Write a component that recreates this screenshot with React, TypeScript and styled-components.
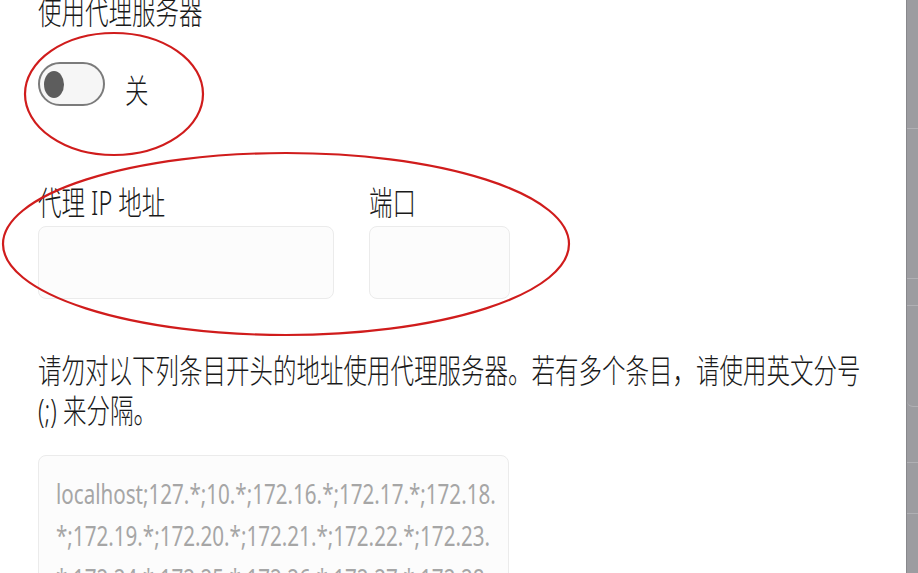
import React from 'react';
import styled, { createGlobalStyle } from 'styled-components';

const GlobalStyle = createGlobalStyle`
  html, body {
    margin: 0;
    padding: 0;
    background: #ffffff;
  }
  body {
    font-family: "Noto Sans", "Noto Sans CJK SC", sans-serif;
    color: #1a1a1a;
  }
`;

const Window = styled.div`
  position: relative;
  display: flex;
  width: 918px;
  height: 573px;
  overflow: hidden;
  background: #ffffff;
`;

const Content = styled.div`
  flex: 1;
  display: flex;
  flex-direction: column;
  padding-left: 38px;
`;

// the screenshot is stretched vertically, so text is stretched the same way
const Tall = styled.span<{ $origin?: string }>`
  display: block;
  transform: scaleY(1.38);
  transform-origin: ${p => p.$origin || 'left center'};
  white-space: nowrap;
`;

const Title = styled.div`
  font-family: "Noto Sans CJK SC", sans-serif;
  font-size: 23.5px;
  font-weight: 300;
  line-height: 20px;
  height: 20px;
`;

const ToggleRow = styled.div`
  display: flex;
  align-items: center;
  margin-top: 42px;
  height: 44px;
`;

const ToggleTrack = styled.div<{ $on?: boolean }>`
  box-sizing: border-box;
  width: 67px;
  height: 44px;
  border: 2px solid #7b7b7b;
  border-radius: 22px;
  background: ${p => (p.$on ? '#0067c0' : '#f6f6f6')};
  display: flex;
  align-items: center;
  justify-content: ${p => (p.$on ? 'flex-end' : 'flex-start')};
  padding: 0 4px;
`;

const ToggleKnob = styled.div<{ $on?: boolean }>`
  width: 20px;
  height: 27px;
  border-radius: 50%;
  background: ${p => (p.$on ? '#ffffff' : '#5d5d5d')};
`;

const ToggleText = styled.div`
  font-family: "Noto Sans CJK SC", sans-serif;
  font-size: 23.5px;
  font-weight: 300;
  line-height: 28px;
  margin-left: 20px;
  margin-top: 10px;
`;

const FieldRow = styled.div`
  display: flex;
  gap: 35px;
  margin-top: 83px;
`;

const Field = styled.div<{ $width: number }>`
  display: flex;
  flex-direction: column;
  width: ${p => p.$width}px;
`;

const FieldLabel = styled.div`
  font-family: "Noto Sans", "Noto Sans CJK SC", sans-serif;
  font-size: 23.5px;
  font-weight: 300;
  line-height: 28px;
  height: 28px;
  margin-bottom: 9px;
`;

const Input = styled.div`
  box-sizing: border-box;
  height: 73px;
  border: 1px solid #ebebeb;
  border-radius: 8px;
  background: #fcfcfc;
`;

const Hint = styled.div`
  width: 845px;
  margin-top: 52px;
  font-family: "Noto Sans", "Noto Sans CJK SC", sans-serif;
  font-size: 23.5px;
  font-weight: 300;
  line-height: 29px;
  height: 58px;

  & > span {
    white-space: normal;
  }
`;

const ExceptionBox = styled.div`
  box-sizing: border-box;
  width: 471px;
  height: 170px;
  margin-top: 46px;
  padding: 16px 0 0 17px;
  border: 1px solid #ebebeb;
  border-radius: 8px;
  background: #fcfcfc;
  flex-shrink: 0;
`;

const ExceptionLines = styled.div`
  font-family: "Noto Sans", sans-serif;
  font-size: 20.6px;
  line-height: 32px;
  color: #a6a6a6;
  transform: scaleY(1.33);
  transform-origin: left top;
`;

const ExceptionLine = styled.div`
  white-space: nowrap;
`;

const SideStrip = styled.div`
  width: 11px;
  flex-shrink: 0;
  display: flex;
  flex-direction: column;
  background: #9c9ca0;
  border-left: 1px solid #88888c;
`;

const StripPart = styled.div<{ $h: number; $round?: boolean }>`
  height: ${p => p.$h}px;
  flex-shrink: 0;
  border-bottom: 1px solid #b0b0b4;
  border-radius: ${p => (p.$round ? '0 0 0 6px' : '0')};
`;

const Marks = styled.svg`
  position: absolute;
  left: 0;
  top: 0;
  pointer-events: none;
`;

const exceptionLines = [
  'localhost;127.*;10.*;172.16.*;172.17.*;172.18.',
  '*;172.19.*;172.20.*;172.21.*;172.22.*;172.23.',
  '*;172.24.*;172.25.*;172.26.*;172.27.*;172.28.',
  '*;172.29.*;172.30.*;172.31.*;192.168.*',
];

const stripParts = [
  { h: 128 },
  { h: 149 },
  { h: 26 },
  { h: 100, round: true },
  { h: 55 },
  { h: 50 },
];

export default function App() {
  const proxyOn = false;

  return (
    <>
      <GlobalStyle />
      <Window>
        <Content>
          <Title>
            <Tall>使用代理服务器</Tall>
          </Title>

          <ToggleRow>
            <ToggleTrack $on={proxyOn}>
              <ToggleKnob $on={proxyOn} />
            </ToggleTrack>
            <ToggleText>
              <Tall>{proxyOn ? '开' : '关'}</Tall>
            </ToggleText>
          </ToggleRow>

          <FieldRow>
            <Field $width={296}>
              <FieldLabel>
                <Tall>代理 IP 地址</Tall>
              </FieldLabel>
              <Input />
            </Field>
            <Field $width={141}>
              <FieldLabel>
                <Tall>端口</Tall>
              </FieldLabel>
              <Input />
            </Field>
          </FieldRow>

          <Hint>
            <Tall $origin="left top">
              请勿对以下列条目开头的地址使用代理服务器。若有多个条目，请使用英文分号 (;) 来分隔。
            </Tall>
          </Hint>

          <ExceptionBox>
            <ExceptionLines>
              {exceptionLines.map((line, i) => (
                <ExceptionLine key={i}>{line}</ExceptionLine>
              ))}
            </ExceptionLines>
          </ExceptionBox>
        </Content>

        <SideStrip>
          {stripParts.map((part, i) => (
            <StripPart key={i} $h={part.h} $round={part.round} />
          ))}
        </SideStrip>

        <Marks width={918} height={573} viewBox="0 0 918 573">
          <ellipse cx={114} cy={94} rx={89} ry={61} fill="none" stroke="#d01c1c" strokeWidth={2.2} />
          <ellipse cx={286} cy={244} rx={283} ry={91} fill="none" stroke="#d01c1c" strokeWidth={2.2} />
        </Marks>
      </Window>
    </>
  );
}
